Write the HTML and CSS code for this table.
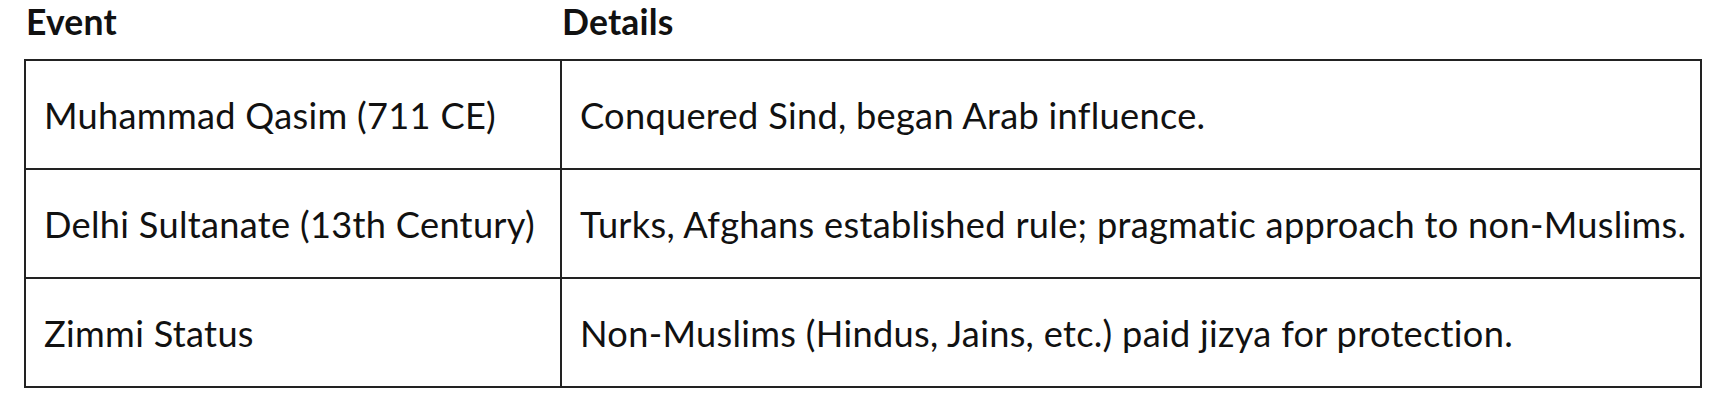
FILE: index.html
```html
<!DOCTYPE html>
<html lang="en">
<head>
<meta charset="utf-8">
<title>Events</title>
<link rel="stylesheet" href="styles.css">
</head>
<body>
<div class="wrap">
  <table class="events">
    <colgroup>
      <col class="c1">
      <col class="c2">
    </colgroup>
    <thead>
      <tr><th>Event</th><th>Details</th></tr>
    </thead>
    <tbody>
      <tr><td>Muhammad Qasim (711 CE)</td><td>Conquered Sind, began Arab influence.</td></tr>
      <tr><td>Delhi Sultanate (13th Century)</td><td>Turks, Afghans established rule; pragmatic approach to non-Muslims.</td></tr>
      <tr><td>Zimmi Status</td><td>Non-Muslims (Hindus, Jains, etc.) paid jizya for protection.</td></tr>
    </tbody>
  </table>
</div>
</body>
</html>
```

FILE: styles.css
```css
html, body {
  margin: 0;
  padding: 0;
  background: #fff;
}
body {
  font-family: Lato, "Open Sans", sans-serif;
  color: #111;
  font-variant-ligatures: none;
}
.wrap {
  padding: 0 0 0 24px;
}
.events {
  border-spacing: 0;
  table-layout: fixed;
  width: 1678px;
}
.c1 { width: 536px; }
.c2 { width: 1142px; }
.events th {
  text-align: left;
  font-weight: 700;
  font-size: 35.5px;
  line-height: 42px;
  letter-spacing: 0.2px;
  padding: 1px 0 16px 2px;
  color: #111;
}
.events td {
  font-size: 36.2px;
  line-height: 43px;
  letter-spacing: 0.3px;
  padding: 33px 16px 31px 18px;
  border-top: 2px solid #222;
  border-left: 2px solid #222;
  white-space: nowrap;
}
.events td:last-child {
  border-right: 2px solid #222;
}
.events tbody tr:last-child td {
  border-bottom: 2px solid #222;
}
```
